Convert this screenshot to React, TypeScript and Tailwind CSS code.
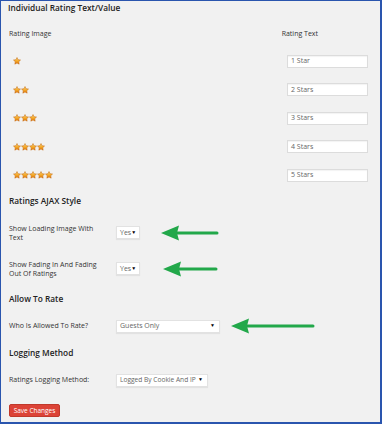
import React from 'react';

const Star = () => (
  <svg width="8" height="8" viewBox="0 0 24 24" className="shrink-0">
    <defs>
      <linearGradient id="sg" x1="0" y1="0" x2="0" y2="1">
        <stop offset="0" stopColor="#ffe07a" />
        <stop offset="0.55" stopColor="#f5a623" />
        <stop offset="1" stopColor="#e07b12" />
      </linearGradient>
    </defs>
    <path
      d="M12 1.5l3.2 6.6 7.3 1-5.3 5.1 1.3 7.2L12 18l-6.5 3.4 1.3-7.2L1.5 9.1l7.3-1z"
      fill="url(#sg)"
      stroke="#c46a12"
      strokeWidth="1.6"
      strokeLinejoin="round"
    />
  </svg>
);

const Arrow = ({ length }: { length: number }) => (
  <svg width={length} height="16" viewBox={`0 0 ${length} 16`} className="shrink-0">
    <line x1="14" y1="8" x2={length - 2} y2="8" stroke="#22a84a" strokeWidth="3" strokeLinecap="round" />
    <path d="M0 8 L18 0.5 L16 8 L18 15.5 Z" fill="#22a84a" />
  </svg>
);

const Select = ({ value, width, size = 'text-[7px]' }: { value: string; width: string; size?: string }) => (
  <div
    className={`flex items-center justify-between h-[13px] bg-white border border-[#e2e2e2] shadow-[0_1px_1px_rgba(0,0,0,0.06)] pl-[3px] pr-[4px] text-[#666] whitespace-nowrap ${size} ${width}`}
  >
    <span>{value}</span>
    <span className="text-[5px] text-black">▼</span>
  </div>
);

const TextInput = ({ value }: { value: string }) => (
  <div className="flex items-center w-[81px] h-[13px] bg-white border border-[#dcdcdc] shadow-[inset_0_1px_1px_rgba(0,0,0,0.05)] px-[3px] text-[7px] text-[#666]">
    {value}
  </div>
);

const Heading = ({ children, className = '' }: { children: React.ReactNode; className?: string }) => (
  <div className={`flex items-center h-[16px] text-[8.3px] font-semibold text-[#222] ${className}`}>{children}</div>
);

const stars = ['1 Star', '2 Stars', '3 Stars', '4 Stars', '5 Stars'];

export default function App() {
  return (
    <div
      className="w-[382px] h-[424px] bg-[#f1f1f1] border-t border-l border-r-2 border-b-2 border-[#2a55ae] pl-[7px] overflow-hidden"
      style={{ fontFamily: '"Open Sans", "Liberation Sans", sans-serif' }}
    >
      <Heading className="-mt-[1px]">Individual Rating Text/Value</Heading>

      <div className="flex items-center justify-between h-[16px] mt-[10px] pl-[1px] pr-[62px] text-[7px] text-[#333]">
        <span>Rating Image</span>
        <span>Rating Text</span>
      </div>

      <div className="mt-[5px] flex flex-col">
        {stars.map((label, i) => (
          <div key={label} className="flex items-center justify-between h-[28.5px] pl-[5px] pr-[12px]">
            <div className="flex">
              {Array.from({ length: i + 1 }).map((_, j) => (
                <Star key={j} />
              ))}
            </div>
            <TextInput value={label} />
          </div>
        ))}
      </div>

      <Heading className="mt-[3.5px] pl-[1px]">Ratings AJAX Style</Heading>

      <div className="flex items-center h-[24px] mt-[11.5px] pl-[1px] text-[7px] leading-[9px] text-[#333]">
        <div className="w-[107px] shrink-0">
          Show Loading Image With
          <br />
          Text
        </div>
        <Select value="Yes" width="w-[24px]" />
        <div className="ml-[21px]">
          <Arrow length={58} />
        </div>
      </div>

      <div className="flex items-center h-[24px] mt-[12px] pl-[1px] text-[7px] leading-[9px] text-[#333]">
        <div className="w-[107px] shrink-0">
          Show Fading In And Fading
          <br />
          Out Of Ratings
        </div>
        <Select value="Yes" width="w-[24px]" />
        <div className="ml-[23px]">
          <Arrow length={55} />
        </div>
      </div>

      <Heading className="mt-[10.5px] pl-[1px]">Allow To Rate</Heading>

      <div className="flex items-center h-[16px] mt-[11px] pl-[1px] text-[7px] text-[#333]">
        <div className="w-[107px] shrink-0">Who Is Allowed To Rate?</div>
        <Select value="Guests Only" width="w-[104px]" />
        <div className="ml-[11px]">
          <Arrow length={84} />
        </div>
      </div>

      <Heading className="mt-[11px] pl-[1px]">Logging Method</Heading>

      <div className="flex items-center h-[16px] mt-[11px] pl-[1px] text-[7px] text-[#333]">
        <div className="w-[107px] shrink-0">Ratings Logging Method:</div>
        <Select value="Logged By Cookie And IP" width="w-[92px]" size="text-[6.6px]" />
      </div>

      <button className="mt-[16px] h-[13px] w-[51px] rounded-[2px] bg-[#dc4337] border border-[#c0392b] text-white text-[6.5px] flex items-center justify-center ml-[1px]">
        Save Changes
      </button>
    </div>
  );
}
